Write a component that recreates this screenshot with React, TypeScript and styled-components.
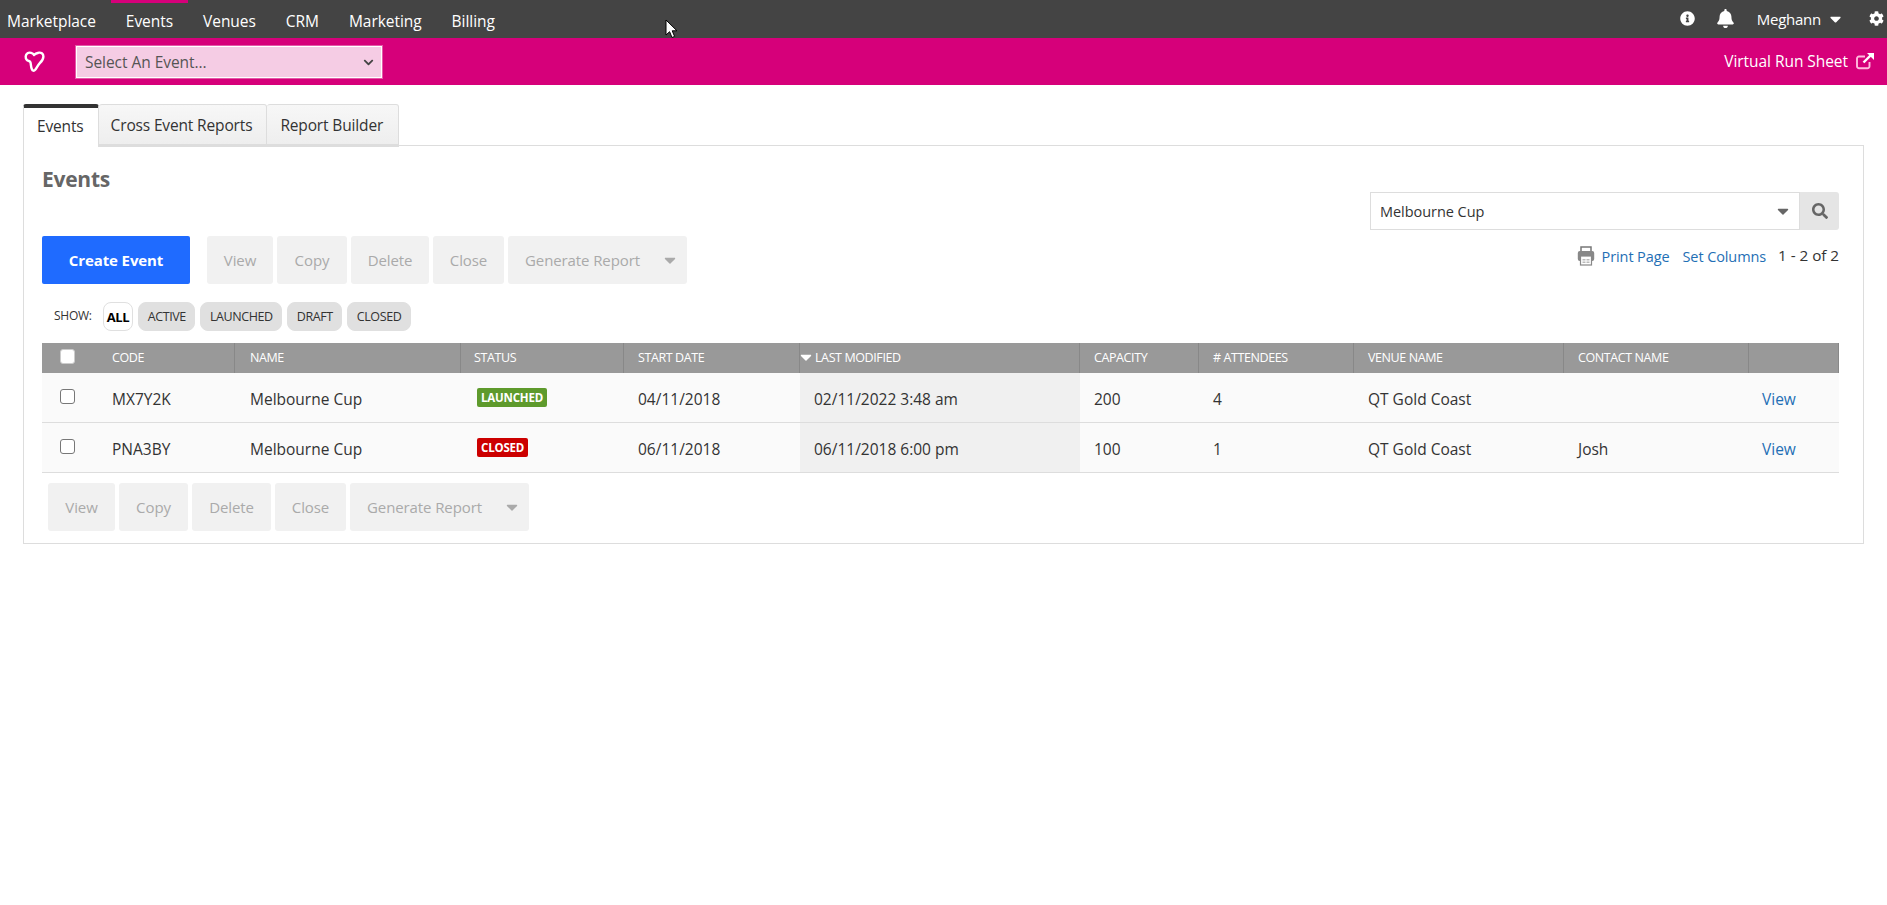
import React from "react";
import styled, { createGlobalStyle } from "styled-components";
import { FaInfoCircle, FaBell, FaCog, FaCaretDown, FaSearch, FaChevronDown } from "react-icons/fa";

const COLS = "70px 123px 226px 163px 176px 280px 119px 155px 210px 185px 90px";

const Global = createGlobalStyle`
  html, body { margin: 0; padding: 0; background: #fff; }
  body { font-family: "Open Sans", "Noto Sans", sans-serif; color: #333; font-size: 15.5px; letter-spacing: -0.05px; }
  * { box-sizing: border-box; }
`;

const Page = styled.div`
  position: relative;
  min-height: 905px;
`;
const TopBar = styled.header`
  height: 38px;
  background: #444;
  display: flex;
  align-items: center;
  color: #fff;
  padding: 0 0 0 7px;
`;
const NavList = styled.nav`
  display: flex;
  gap: 30px;
  flex: 1;
  height: 100%;
`;
const NavItem = styled.a<{ $active?: boolean }>`
  position: relative;
  display: flex;
  align-items: center;
  height: 100%;
  font-size: 15.5px;
  padding-top: 3px;
  &::before {
    content: "";
    display: ${(p) => (p.$active ? "block" : "none")};
    position: absolute;
    top: 0;
    left: -15px;
    right: -15px;
    height: 3px;
    background: #d6007a;
  }
`;
const UserArea = styled.div`
  display: flex;
  align-items: center;
  font-size: 15px;
  letter-spacing: -0.25px;
  padding-bottom: 1px;
`;
const InfoIcon = styled(FaInfoCircle)`
  width: 15px;
  height: 15px;
  margin-right: 22px;
`;
const BellIcon = styled(FaBell)`
  width: 17px;
  height: 19px;
  margin-right: 23px;
`;
const UserCaret = styled(FaCaretDown)`
  width: 11px;
  height: 18px;
  margin: 0 28px 0 9px;
`;
const CogIcon = styled(FaCog)`
  width: 15px;
  height: 15px;
  margin-right: 3px;
`;
const PinkBar = styled.div`
  height: 47px;
  background: #d6007a;
  display: flex;
  align-items: center;
  color: #fff;
  padding: 0 12px 0 24px;
`;
const EventSelect = styled.div`
  width: 306px;
  height: 32px;
  margin-left: 30px;
  background: #f5cce4;
  border: 1px solid #fff;
  outline: 1px solid rgba(255,255,255,.35);
  color: #555;
  display: flex;
  align-items: center;
  justify-content: space-between;
  padding: 1px 7px 0 8px;
`;
const SelectChevron = styled(FaChevronDown)`
  width: 11px;
  height: 11px;
  color: #444;
`;
const RunSheet = styled.a`
  margin-left: auto;
  display: flex;
  align-items: center;
  gap: 8px;
  padding-bottom: 2px;
`;
const Content = styled.main`
  padding: 19px 23px 0 23px;
`;
const TabStrip = styled.div`
  display: flex;
  position: relative;
  z-index: 1;
  height: 42px;
`;
const Tab = styled.a<{ $active?: boolean }>`
  display: flex;
  align-items: center;
  letter-spacing: -0.15px;
  padding: ${(p) => (p.$active ? "0 14px 4px 13px" : "1px 14px 0 12px")};
  color: #333;
  border: 1px solid #ddd;
  border-left-width: ${(p) => (p.$active ? "1px" : "0")};
  border-top: ${(p) => (p.$active ? "4px solid #333" : "1px solid #ddd")};
  border-bottom: ${(p) => (p.$active ? "0" : "3px solid #ddd")};
  border-radius: 3px 3px 0 0;
  background: ${(p) => (p.$active ? "#fff" : "linear-gradient(#f7f7f7, #eee)")};
  height: 43px;
  &:last-child {
    padding: 1px 15px 0 13px;
  }
`;
const Panel = styled.section`
  margin-top: -1px;
  height: 399px;
  border: 1px solid #ddd;
  padding: 0 24px 0 18px;
`;
const HeadRow = styled.div`
  display: flex;
  justify-content: space-between;
  align-items: flex-start;
  height: 90px;
`;
const Title = styled.h1`
  margin: 19px 0 0;
  font-size: 21px;
  line-height: 28px;
  font-weight: 700;
  color: #666;
  letter-spacing: -0.25px;
`;
const ToolRow = styled.div`
  display: flex;
  justify-content: space-between;
  align-items: flex-start;
  height: 48px;
`;
const SearchBox = styled.div`
  display: flex;
  margin-top: 46px;
  width: 469px;
  height: 38px;
`;
const SearchInput = styled.div`
  flex: 1;
  border: 1px solid #ddd;
  display: flex;
  align-items: center;
  justify-content: space-between;
  padding: 0 10px 0 9px;
  font-size: 14.5px;
`;
const SearchCaret = styled(FaCaretDown)`
  width: 12px;
  height: 18px;
  color: #666;
`;
const SearchButton = styled.div`
  width: 39px;
  background: #e5e5e5;
  border-radius: 0 3px 3px 0;
  display: flex;
  align-items: center;
  justify-content: center;
  color: #666;
`;
const Actions = styled.div<{ $bottom?: boolean }>`
  display: flex;
  gap: 4px;
  margin-left: ${(p) => (p.$bottom ? "6px" : "0")};
  margin-top: ${(p) => (p.$bottom ? "10px" : "0")};
`;
const PrimaryButton = styled.button`
  width: 148px;
  height: 48px;
  margin-right: 13px;
  background: #1f6bff;
  border: 0;
  border-radius: 2px;
  color: #fff;
  font: 700 15px "Open Sans", sans-serif;
  letter-spacing: -0.1px;
`;
const GhostButton = styled.button<{ $w: number }>`
  width: ${(p) => p.$w}px;
  height: 48px;
  background: #f1f1f1;
  border: 0;
  border-radius: 3px;
  color: #aaa;
  font: 15px "Open Sans", sans-serif;
  letter-spacing: -0.1px;
  display: flex;
  align-items: center;
  justify-content: center;
  padding: 0;
`;
const GhostCaret = styled(FaCaretDown)`
  width: 12px;
  height: 18px;
  color: #aaa;
  margin: 0 -6px 0 24px;
`;
const Meta = styled.div`
  display: flex;
  align-items: center;
  font-size: 14.5px;
  letter-spacing: -0.1px;
  margin-top: 8px;
  height: 24px;
`;
const PrintIcon = styled.svg`
  width: 18px;
  height: 20px;
  margin-right: 7px;
`;
const Link = styled.a`
  color: #1f6fb5;
`;
const SetColumns = styled(Link)`
  margin-left: 13px;
`;
const Count = styled.span`
  margin-left: 12px;
  padding-bottom: 2px;
  color: #333;
  font-size: 15.3px;
  letter-spacing: -0.05px;
`;
const FilterRow = styled.div`
  display: flex;
  align-items: center;
  gap: 5px;
  margin-top: 18px;
  height: 29px;
`;
const ShowLabel = styled.span`
  font-size: 12px;
  letter-spacing: -0.25px;
  margin: 0 6px 3px 12px;
`;
const Pill = styled.span<{ $active?: boolean }>`
  height: 29px;
  padding: ${(p) => (p.$active ? "0 3px" : "0 8.5px")};
  border-radius: 8px;
  font-size: ${(p) => (p.$active ? "13px" : "12.5px")};
  font-weight: ${(p) => (p.$active ? 700 : 400)};
  color: ${(p) => (p.$active ? "#000" : "#333")};
  background: ${(p) => (p.$active ? "#fff" : "#e0e0e0")};
  border: 1px solid #e0e0e0;
  display: flex;
  align-items: center;
  letter-spacing: -0.4px;
`;
const Table = styled.div`
  margin-top: 12px;
`;
const HeaderRow = styled.div`
  display: grid;
  grid-template-columns: ${COLS};
  height: 30px;
  background: #999;
  color: #fff;
  font-size: 12.5px;
  letter-spacing: -0.4px;
`;
const HeaderCell = styled.div<{ $sep?: boolean; $pad?: number }>`
  display: flex;
  align-items: center;
  padding-left: ${(p) => p.$pad ?? 14}px;
  padding-bottom: 2px;
  border-right: ${(p) => (p.$sep === false ? "0" : "1px solid #888")};
`;
const SortCaret = styled(FaCaretDown)`
  width: 12px;
  height: 18px;
  margin-right: 3px;
`;
const BodyRow = styled.div`
  display: grid;
  grid-template-columns: ${COLS};
  height: 50px;
  background: #fafafa;
  border-bottom: 1px solid #ddd;
  letter-spacing: 0;
`;
const Cell = styled.div<{ $sorted?: boolean; $pad?: number }>`
  display: flex;
  align-items: center;
  padding-top: 2px;
  padding-left: ${(p) => p.$pad ?? 14}px;
  background: ${(p) => (p.$sorted ? "#f0f0f0" : "transparent")};
`;
const CheckBox = styled.span<{ $filled?: boolean }>`
  width: 15px;
  height: 15px;
  border: 1px solid ${(p) => (p.$filled ? "#ccc" : "#777")};
  border-radius: 3px;
  background: #fff;
  display: block;
  margin-bottom: ${(p) => (p.$filled ? "1px" : "5px")};
`;
const Badge = styled.span<{ $color: string }>`
  background: ${(p) => p.$color};
  color: #fff;
  font-size: 11.5px;
  font-weight: 700;
  height: 19px;
  padding: 0 4px;
  border-radius: 2px;
  display: flex;
  align-items: center;
  margin: 0 0 2px 2px;
  letter-spacing: -0.2px;
`;
const Cursor = styled.svg`
  position: absolute;
  left: 665px;
  top: 19px;
  width: 12px;
  height: 20px;
`;

const heads: [string, number?][] = [
  ["NAME", 15], ["STATUS", 13], ["START DATE"],
];
const restHeads = ["CAPACITY", "# ATTENDEES", "VENUE NAME", "CONTACT NAME"];

const rows = [
  { code: "MX7Y2K", status: "LAUNCHED", color: "#5e9a2c", start: "04/11/2018", mod: "02/11/2022 3:48 am", cap: "200", att: "4", contact: "" },
  { code: "PNA3BY", status: "CLOSED", color: "#cc0000", start: "06/11/2018", mod: "06/11/2018 6:00 pm", cap: "100", att: "1", contact: "Josh" },
];

const ActionSet = ({ bottom }: { bottom?: boolean }) => (
  <Actions $bottom={bottom}>
    {!bottom && <PrimaryButton>Create Event</PrimaryButton>}
    <GhostButton $w={bottom ? 67 : 66}>View</GhostButton>
    <GhostButton $w={bottom ? 69 : 70}>Copy</GhostButton>
    <GhostButton $w={bottom ? 79 : 78}>Delete</GhostButton>
    <GhostButton $w={71}>Close</GhostButton>
    <GhostButton $w={179}>Generate Report<GhostCaret /></GhostButton>
  </Actions>
);

export default function App() {
  return (
    <Page>
      <Global />
      <TopBar>
        <NavList>
          <NavItem>Marketplace</NavItem>
          <NavItem $active>Events</NavItem>
          <NavItem>Venues</NavItem>
          <NavItem>CRM</NavItem>
          <NavItem>Marketing</NavItem>
          <NavItem>Billing</NavItem>
        </NavList>
        <UserArea>
          <InfoIcon />
          <BellIcon />
          Meghann
          <UserCaret />
          <CogIcon />
        </UserArea>
      </TopBar>
      <PinkBar>
        <svg width="22" height="22" viewBox="0 0 22 22" fill="none" stroke="#fff" strokeWidth="2.4" strokeLinejoin="round">
          <path d="M10 4C8.8 2 5.5 1 3.5 2.2C1.2 3.6 1.2 7.2 2.8 8.8C4 10 5.8 10 6.4 11.2C7 12.8 6.8 15.8 7.8 18C8.6 20 10 20.2 11.2 18.8C12.8 16.8 13.8 14.2 15.8 12.2C17.8 10.2 19.4 8.2 19.4 5.4C19.4 2.6 17 1.2 14.6 1.7C12.6 2 11 2.8 10 4Z" />
        </svg>
        <EventSelect>
          Select An Event...
          <SelectChevron />
        </EventSelect>
        <RunSheet>
          Virtual Run Sheet
          <svg width="19" height="18" viewBox="0 0 19 18" fill="none">
            <path d="M13.5 10v4.2a2 2 0 0 1-2 2H3a2 2 0 0 1-2-2V6.5a2 2 0 0 1 2-2h6" stroke="#fbd" strokeWidth="1.9" />
            <path d="M7.5 10.5L15.5 2.5" stroke="#fff" strokeWidth="2.4" />
            <path d="M11 1h7v7z" fill="#fff" />
          </svg>
        </RunSheet>
      </PinkBar>
      <Content>
        <TabStrip>
          <Tab $active>Events</Tab>
          <Tab>Cross Event Reports</Tab>
          <Tab>Report Builder</Tab>
        </TabStrip>
        <Panel>
          <HeadRow>
            <Title>Events</Title>
            <SearchBox>
              <SearchInput>
                Melbourne Cup
                <SearchCaret />
              </SearchInput>
              <SearchButton><FaSearch size={16} /></SearchButton>
            </SearchBox>
          </HeadRow>
          <ToolRow>
            <ActionSet />
            <Meta>
              <PrintIcon viewBox="0 0 18 20">
                <path d="M4 1h10v5H4z" fill="none" stroke="#777" strokeWidth="1.5" />
                <rect x="0.8" y="5" width="16.4" height="10" rx="2" fill="#888" />
                <rect x="3.5" y="10" width="11" height="9" fill="#fff" stroke="#888" strokeWidth="1.2" />
                <path d="M5.5 13h3v1.5h-3zM9.5 13h3v1.5h-3zM5.5 15.5h3V17h-3zM9.5 15.5h3V17h-3z" fill="#bbb" />
              </PrintIcon>
              <Link>Print Page</Link>
              <SetColumns>Set Columns</SetColumns>
              <Count>1 - 2 of 2</Count>
            </Meta>
          </ToolRow>
          <FilterRow>
            <ShowLabel>SHOW:</ShowLabel>
            <Pill $active>ALL</Pill>
            <Pill>ACTIVE</Pill>
            <Pill>LAUNCHED</Pill>
            <Pill>DRAFT</Pill>
            <Pill>CLOSED</Pill>
          </FilterRow>
          <Table>
            <HeaderRow>
              <HeaderCell $sep={false} $pad={18}><CheckBox $filled /></HeaderCell>
              <HeaderCell $pad={0}>CODE</HeaderCell>
              {heads.map(([h, p]) => <HeaderCell key={h} $pad={p}>{h}</HeaderCell>)}
              <HeaderCell $pad={0}><SortCaret />LAST MODIFIED</HeaderCell>
              {restHeads.map((h) => <HeaderCell key={h}>{h}</HeaderCell>)}
              <HeaderCell />
            </HeaderRow>
            {rows.map((r) => (
              <BodyRow key={r.code}>
                <Cell $pad={18}><CheckBox /></Cell>
                <Cell $pad={0}>{r.code}</Cell>
                <Cell $pad={15}>Melbourne Cup</Cell>
                <Cell $pad={14}><Badge $color={r.color}>{r.status}</Badge></Cell>
                <Cell>{r.start}</Cell>
                <Cell $sorted>{r.mod}</Cell>
                <Cell>{r.cap}</Cell>
                <Cell>{r.att}</Cell>
                <Cell>QT Gold Coast</Cell>
                <Cell>{r.contact}</Cell>
                <Cell $pad={13}><Link>View</Link></Cell>
              </BodyRow>
            ))}
          </Table>
          <ActionSet bottom />
        </Panel>
      </Content>
      <Cursor viewBox="0 0 12 20">
        <path d="M1 1v15l3.6-3.3L7 18.5l2.6-1.1-2.4-5.6H12z" fill="#fff" stroke="#000" strokeWidth="1" />
      </Cursor>
    </Page>
  );
}
